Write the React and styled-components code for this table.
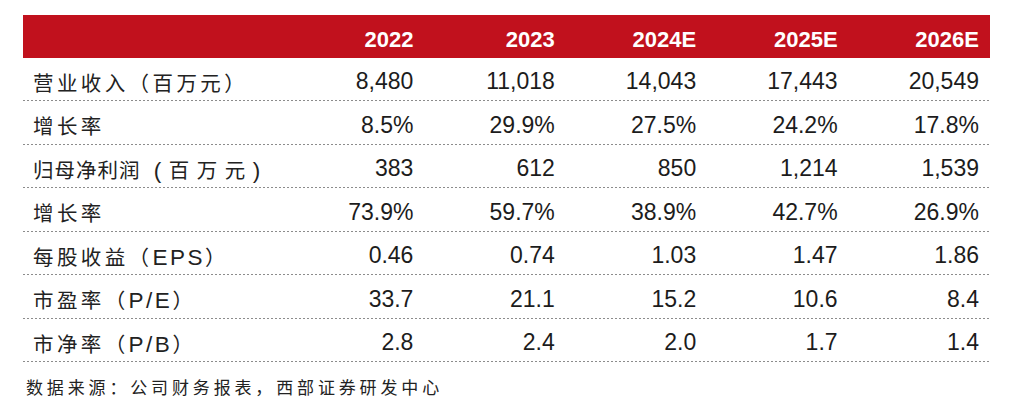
import React from "react";
import styled, { createGlobalStyle } from "styled-components";

const Global = createGlobalStyle`
  html, body { margin: 0; padding: 0; background: #ffffff; }
  body { font-family: "Liberation Sans", Arial, "Noto Sans CJK SC", sans-serif; }
`;

const Page = styled.div`
  width: 1029px;
  height: 400px;
  box-sizing: border-box;
  padding: 15px 39px 0 23px;
  background: #fff;
`;

const Table = styled.div`
  display: flex;
  flex-direction: column;
  width: 967px;
`;

const Row = styled.div`
  display: grid;
  grid-template-columns: 260px repeat(5, 1fr);
  align-items: center;
  box-sizing: border-box;
`;

const HeaderRow = styled(Row)`
  height: 42.5px;
  background: #c1111d;
  padding-top: 7px;
`;

const BodyRow = styled(Row)`
  height: 43.5px;
  padding-top: 5px;
  background-image: linear-gradient(to right, #8c8c8c 55%, rgba(255, 255, 255, 0) 55%);
  background-size: 4px 1px;
  background-repeat: repeat-x;
  background-position: left bottom;
`;

const HeadCell = styled.div`
  text-align: right;
  padding-right: 11px;
  color: #fff;
  font-family: "Liberation Sans", Arial, sans-serif;
  font-weight: 700;
  font-size: 22px;
`;

const Label = styled.div`
  padding-left: 10px;
  font-family: "Liberation Sans", "Noto Sans CJK SC", sans-serif;
  font-size: 20.5px;
  letter-spacing: 3.4px;
  color: #222;
  white-space: nowrap;
`;

const Latin = styled.span`
  font-family: "Liberation Sans", Arial, sans-serif;
  font-size: 22.5px;
  letter-spacing: ${(p) => (p.$ls !== undefined ? p.$ls : 2.5)}px;
`;

const Seg = styled.span`
  letter-spacing: ${(p) => p.$ls}px;
`;

const Value = styled.div`
  text-align: right;
  padding-right: 11px;
  font-family: "Liberation Sans", Arial, sans-serif;
  font-size: 23px;
  color: #1c1c1c;
`;

const Source = styled.div`
  margin-top: 12px;
  padding-left: 3px;
  font-family: "Noto Sans CJK SC", sans-serif;
  font-size: 17px;
  letter-spacing: 3.85px;
  color: #222;
  white-space: nowrap;
`;

const years = ["2022", "2023", "2024E", "2025E", "2026E"];

const rows = [
  { label: <>营业收入（百万元）</>, values: ["8,480", "11,018", "14,043", "17,443", "20,549"] },
  { label: <>增长率</>, values: ["8.5%", "29.9%", "27.5%", "24.2%", "17.8%"] },
  {
    label: (
      <>
        <Seg $ls={1}>归母净利润</Seg>
        <Seg $ls={7.5}>
          {" "}
          <Latin $ls={7.5}>(</Latin>百万元<Latin $ls={0}>)</Latin>
        </Seg>
      </>
    ),
    values: ["383", "612", "850", "1,214", "1,539"],
  },
  { label: <>增长率</>, values: ["73.9%", "59.7%", "38.9%", "42.7%", "26.9%"] },
  { label: <>每股收益（<Latin>EPS</Latin>）</>, values: ["0.46", "0.74", "1.03", "1.47", "1.86"] },
  { label: <>市盈率（<Latin>P/E</Latin>）</>, values: ["33.7", "21.1", "15.2", "10.6", "8.4"] },
  { label: <>市净率（<Latin>P/B</Latin>）</>, values: ["2.8", "2.4", "2.0", "1.7", "1.4"] },
];

export default function App() {
  return (
    <Page>
      <Global />
      <Table>
        <HeaderRow>
          <div />
          {years.map((y) => (
            <HeadCell key={y}>{y}</HeadCell>
          ))}
        </HeaderRow>
        {rows.map((r, i) => (
          <BodyRow key={i}>
            <Label>{r.label}</Label>
            {r.values.map((v, j) => (
              <Value key={j}>{v}</Value>
            ))}
          </BodyRow>
        ))}
      </Table>
      <Source>数据来源：公司财务报表，西部证券研发中心</Source>
    </Page>
  );
}
